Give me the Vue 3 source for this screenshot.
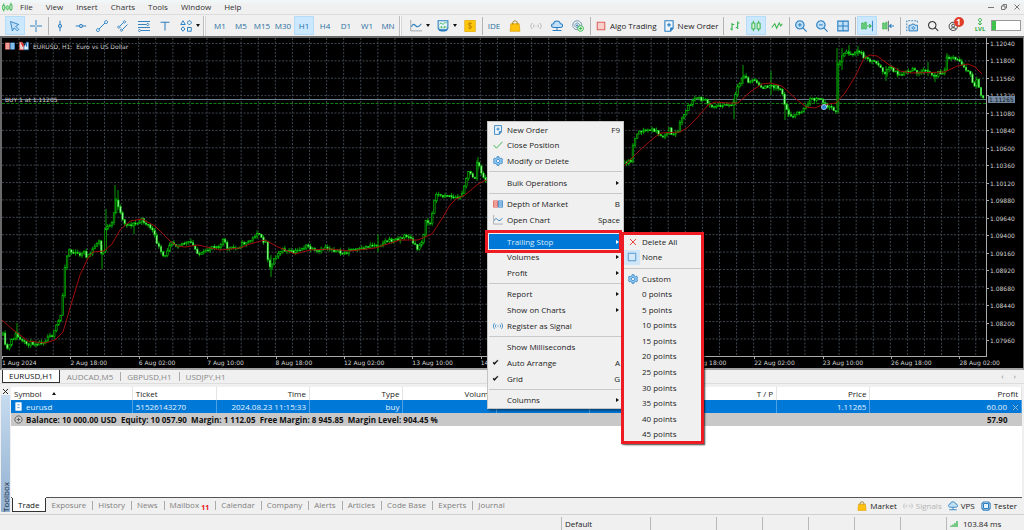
<script setup>
import { h } from 'vue'

const BLUE = '#2b7fc0'
const GREEN = '#35b44a'
const SKY = '#bfe0f8'

/* Icon shapes on a 16-unit grid: d = path, s = stroke, f = fill, w = stroke width, a = dash pattern */
const shapes = {
  logo: [{ d: 'M1 5h3v6h-3zM2.500 2v3M2.500 11v3M11.500 4h3v7h-3zM13 1v3M13 11v2', s: GREEN, w: 1.3 }, { d: 'M5 8l3-3 3 3-3 4z', s: GREEN, f: '#8fe09c' }],
  cursor: [{ d: 'M2 2l11 4-4 2.500 4 4-2 2-4-4-2.500 4z', s: BLUE, f: SKY, w: 1.2 }],
  cross: [{ d: 'M8 0v16M0 8h16', s: BLUE, w: 1.3 }, { d: 'M6.500 8h3M8 6.500v3', s: '#f0f0f0', w: 1 }],
  vline: [{ d: 'M8 1v4.500M8 10.500V15', s: BLUE, w: 1.4 }, { d: 'M8 6a2 2 0 1 0 .01 0z', s: BLUE, w: 1.4 }],
  hline: [{ d: 'M1 8h4.500M10.500 8H15', s: BLUE, w: 1.4 }, { d: 'M8 6a2 2 0 1 0 .01 0z', s: BLUE, w: 1.4 }],
  trend: [{ d: 'M3.500 12.500l9-9', s: BLUE, w: 1.3 }, { d: 'M2.500 11.500a2 2 0 1 0 .01 0zM13.500 .8a2 2 0 1 0 .01 0z', s: BLUE, f: '#e8f2fa', w: 1.3 }],
  channel: [{ d: 'M3 9l7-7M6 14l8-8', s: BLUE, w: 1.3 }, { d: 'M2.500 8a1.500 1.500 0 1 0 .01 0zM10 1a1.500 1.500 0 1 0 .01 0zM6 12a1.500 1.500 0 1 0 .01 0z', s: BLUE, f: '#f0f0f0', w: 1.2 }],
  fibo: [{ d: 'M0 2h16M0 6h11M0 10h16M4 14h12', s: BLUE, w: 1.3 }, { d: 'M13 4.500a1.500 1.500 0 1 0 .01 0zM2 12.500a1.500 1.500 0 1 0 .01 0z', s: BLUE, f: '#f0f0f0', w: 1.2 }],
  tee: [{ d: 'M2 3h12M8 3v11', s: BLUE, w: 1.4 }],
  figures: [{ d: 'M4 1l3 5H1zM12.500 1a2.500 2.500 0 1 0 .01 0zM4 9l2.500 3L4 15l-2.500-3zM10 10h5v5h-5z', s: BLUE, f: '#e8f2fa', w: 1.3 }],
  chart: [{ d: 'M1 0v14.500h15', s: '#8a8f94', w: 1 }, { d: 'M2 9c2-5 4-3 6-1s4 1 7-3', s: BLUE, w: 1.5 }],
  indicator: [{ d: 'M1.500 1h13v10c-2 5-11 5-13 0z', s: BLUE, f: '#e4f2fc', w: 1.4 }, { d: 'M3 6c3-4 4 1 6-1s2-2 4-1', s: GREEN, w: 1.2 }, { d: 'M4 9v2M6 8v3M8 9v2M10 8v3M12 8v3', s: GREEN, w: 1 }, { d: 'M3 13.500h10', s: BLUE, w: 2.5 }],
  dollar: [{ d: 'M1 0.500h14v15H1z', s: '#e0a800', f: '#ffc80a' }, { d: 'M10.500 5c-1-1.500-5-1.500-5 .7s5 1.300 5 3.400-4 2.400-5.200.6M8 3v9.500', s: '#b57c00', w: 1.1 }],
  bag: [{ d: 'M2.500 5h11l1 10h-13z', s: '#e0a100', f: '#ffc20e' }, { d: 'M5 6V3.500c0-3 6-3 6 0V6', s: '#9c7a1c', w: 1.3 }],
  signalOff: [{ d: 'M3 4c-2.500 2-2.500 6 0 8M5.500 6c-1 1-1 3 0 4M13 4c2.500 2 2.500 6 0 8M10.500 6c1 1 1 3 0 4M7.500 8h1', s: '#b4b8bb', w: 1.3 }],
  signal: [{ d: 'M2.500 3.500c-2.500 2-2.500 7 0 9M4.800 5.500c-1.300 1.500-1.300 3.500 0 5M13.500 3.500c2.500 2 2.500 7 0 9M11.200 5.500c1.300 1.500 1.300 3.500 0 5M7 8h2', s: BLUE, w: 1.3 }],
  cloud: [{ d: 'M4 10C-.5 10 0 5 3.500 5c.5-5 8-5 9 0 4 0 4 5 0 5z', s: BLUE, f: SKY, w: 1.4 }, { d: 'M8 10v4M2 14h12', s: BLUE, w: 1.4 }],
  radar: [{ d: 'M7 1a6 6 0 1 0 .01 0zM7 4a3.200 3.200 0 1 0 .01 0z', s: '#6e97b5', w: 1.3 }, { d: 'M7 6.500a1 1 0 1 0 .01 0z', s: BLUE, w: 1.3 }, { d: 'M11.500 7.500a3.800 3.800 0 1 0 .01 0z', s: GREEN, f: '#d8f5dc', w: 1.2 }, { d: 'M9.500 11.300h4M11.500 9.300v4', s: GREEN, w: 1.2 }],
  algo: [{ d: 'M3 3h10v10H3z', s: '#e0605a', f: '#f9d0cc', w: 1.4 }],
  order: [{ d: 'M2.500 1h11v10l-3.500 4H2.500z', s: BLUE, f: '#eef6fd', w: 1.4 }, { d: 'M13.500 10.500H10V15', s: BLUE, f: BLUE }, { d: 'M5.500 6.500h5M8 4v5', s: BLUE, w: 1.5 }],
  bars: [{ d: 'M4 4v10M1.500 12H4M4 6h3M11.500 2v10M9 10h2.500M11.500 4H14', s: GREEN, w: 1.5 }],
  candles: [{ d: 'M2.500 4h4v8h-4zM4.500 1v3M4.500 12v3M9.500 4h4v8h-4zM11.500 1v3M11.500 12v3', s: GREEN, f: '#d3f3d8', w: 1.3 }],
  zigzag: [{ d: 'M1 10l4-5 2.500 6L11 4l2 4 2-3', s: GREEN, w: 1.4 }],
  zoomIn: [{ d: 'M6.500 1a5.500 5.500 0 1 0 .01 0zM10.500 10.500l5 5', s: BLUE, f: SKY, w: 1.5 }, { d: 'M4 6.500h5M6.500 4v5', s: BLUE, w: 1.3 }],
  zoomOut: [{ d: 'M6.500 1a5.500 5.500 0 1 0 .01 0zM10.500 10.500l5 5', s: BLUE, f: SKY, w: 1.5 }, { d: 'M4 6.500h5', s: BLUE, w: 1.3 }],
  tiles: [{ d: 'M1 1.500h14v13H1zM8 1.500v13M1 8h14', s: BLUE, f: SKY, w: 1.4 }],
  scroll: [{ d: 'M1 4h2v8H1zM5 3h2v9H5z', s: GREEN, f: '#8fdc9b', w: 1.2 }, { d: 'M8 8h5M11 5.500L13.500 8 11 10.500', s: GREEN, w: 1.4 }, { d: 'M15.300 1v14', s: BLUE, w: 1.2 }],
  shift: [{ d: 'M1 4h2v8H1zM5 3h1.500v9H5z', s: GREEN, f: '#8fdc9b', w: 1.2 }, { d: 'M8.500 1v14', s: '#51606b', w: 1.2 }, { d: 'M10 8h6M12.500 5.500L10 8l2.500 2.500', s: BLUE, w: 1.4 }],
  camera: [{ d: 'M1 15V1h14v4', s: BLUE, w: 1.2, a: '2.5 1.5' }, { d: 'M4 7h3l1-1.500h3L12 7h3.500v7.500H4z', s: BLUE, f: SKY, w: 1.3 }, { d: 'M9.800 9a1.600 1.600 0 1 0 .01 0z', s: BLUE, w: 1.3 }],
  search: [{ d: 'M7 2a5 5 0 1 0 .01 0zM11 10.500l4 4', s: '#333', w: 1.4 }],
  user: [{ d: 'M7 3a5.500 5.500 0 1 0 .01 0zM7 5.500a2 2 0 1 0 .01 0zM3 12.500c2-3 6-3 8 0', s: '#333', w: 1.3 }],
  level: [{ d: 'M8 1a3 3 0 1 0 .01 0zM8 7v7M4.500 10.500L8 14l3.500-3.500', s: GREEN, w: 2 }],
  check: [{ d: 'M1 8l4.500 5L15 3', s: GREEN, w: 1.5 }],
  gear: [{ d: 'M6.500 1h3l.5 2 2 1 2-.5L15.500 6 14 8l1.500 2-1.500 2.500-2-.5-2 1-.5 2h-3L6 13l-2-1-2 .5L.5 10 2 8 .5 6 2 3.500l2 .5 2-1z', s: BLUE, f: '#8cc4ee', w: 1.2 }, { d: 'M8 5.500a2.500 2.500 0 1 0 .01 0z', s: BLUE, f: '#f4faff', w: 1.3 }],
  depth: [{ d: 'M.5 3h7v10h-7zM.5 6.300h7M.5 9.600h7', s: '#e0524a', f: '#f8cfcb', w: 1.3 }, { d: 'M8.500 3h7v10h-7zM8.500 6.300h7M8.500 9.600h7', s: BLUE, f: SKY, w: 1.3 }],
  remove: [{ d: 'M2 2l12 12M14 2L2 14', s: '#e53a32', w: 1.9 }],
  box: [{ d: 'M2 2h12v12H2z', s: BLUE, f: '#d3e8f9', w: 1.2 }],
  tick: [{ d: 'M2 8.500L5.500 13 14 3.500 12 3 5.500 9 4 7z', s: '#111', f: '#111', w: 1 }],
  chip: [{ d: 'M4 4h8v8H4z', s: BLUE, f: '#e4f3fd', w: 1.6 }, { d: 'M4 1.500h8l2.500 2.500v8L12 14.500H4L1.500 12V4z', s: BLUE, w: 1.8 }],
  strength: [{ d: 'M2 11v3M6 9v5M10 6v8M14 2v12', s: GREEN, w: 2.6 }],
  doc: [{ d: 'M3 1h10v14H3z', s: '#fff', f: '#fff' }, { d: 'M6 5h4M6 10h4', s: '#2b7fc0', w: 1.4 }],
  plus: [{ d: 'M8 1.500a6.500 6.500 0 1 0 .01 0zM5 8h6M8 5v6', s: '#444', w: 1.3 }],
  oneClick: [{ d: 'M1 2h4l3 6v6H1z', s: '#e0524a', f: '#f4d4d1', w: 1.2 }, { d: 'M15 2h-3L8 9v5h7z', s: BLUE, f: '#e6f3fd', w: 1.2 }, { d: 'M4 3l3 6', s: '#d22', w: 2 }, { d: 'M12 3v6', s: '#1a6fc0', w: 2 }]
}

const Icon = (props) =>
  h('svg', { viewBox: '0 0 16 16', width: props.size || 12, height: props.size || 12, 'aria-hidden': 'true' },
    shapes[props.name].map((p) =>
      h('path', { d: p.d, stroke: p.s, fill: p.f || 'none', 'stroke-width': p.w || 1, 'stroke-dasharray': p.a })))
Icon.props = ['name', 'size']

const menus = ['File', 'View', 'Insert', 'Charts', 'Tools', 'Window', 'Help']

const toolbar = [
  { icon: 'cursor', label: 'Cursor', on: true }, { icon: 'cross', label: 'Crosshair' }, { sep: true },
  { icon: 'vline', label: 'Vertical line' }, { icon: 'hline', label: 'Horizontal line' }, { icon: 'trend', label: 'Trendline' },
  { icon: 'channel', label: 'Channel' }, { icon: 'fibo', label: 'Fibonacci' }, { icon: 'tee', label: 'Text' },
  { icon: 'figures', label: 'Shapes', drop: true }, { grip: true },
  ...['M1', 'M5', 'M15', 'M30', 'H1', 'H4', 'D1', 'W1', 'MN'].map((t) => ({ text: t, on: t === 'H1' })), { grip: true },
  { icon: 'chart', label: 'Chart type', drop: true }, { icon: 'indicator', label: 'Indicators', drop: true },
  { icon: 'dollar', label: 'Symbols' }, { sep: true },
  { text: 'IDE' }, { icon: 'bag', label: 'Market' }, { icon: 'signalOff', label: 'Signals' },
  { icon: 'cloud', label: 'Hosting' }, { icon: 'radar', label: 'Network' }, { sep: true },
  { icon: 'algo', wide: 'Algo Trading' }, { icon: 'order', wide: 'New Order' }, { sep: true },
  { icon: 'bars', label: 'Bars' }, { icon: 'candles', label: 'Candles', on: true }, { icon: 'zigzag', label: 'Line' }, { sep: true },
  { icon: 'zoomIn', label: 'Zoom in' }, { icon: 'zoomOut', label: 'Zoom out' }, { icon: 'tiles', label: 'Tile windows' }, { sep: true },
  { icon: 'scroll', label: 'Auto scroll', on: true }, { icon: 'shift', label: 'Chart shift' }, { sep: true },
  { icon: 'camera', label: 'Screenshot' }, { icon: 'search', label: 'Search' }, { icon: 'user', label: 'Account', badge: '1' }
]

const prices = Array.from({ length: 18 }, (_, i) => (1.1204 - i * 0.0024).toFixed(5))
const times = ['1 Aug 2024', '2 Aug 18:00', '6 Aug 02:00', '7 Aug 10:00', '8 Aug 18:00', '12 Aug 02:00', '13 Aug 10:00',
  '14 Aug 18:00', '16 Aug 02:00', '19 Aug 10:00', '20 Aug 18:00', '22 Aug 02:00', '23 Aug 10:00', '26 Aug 18:00', '28 Aug 02:00']

/* Price path in plot units; candles are interpolated along it */
const track = [[2, 325], [3, 335], [5, 346], [8, 349], [12, 340], [16, 334], [20, 340], [25, 344], [33, 343], [40, 343], [46, 339], [50, 334],
  [53, 336], [57, 325], [61, 315], [62, 312], [64, 270], [67, 256], [69, 249], [72, 253], [78, 254], [82, 254], [84, 249], [86, 258], [88, 257],
  [93, 249], [97, 243], [99, 241], [100, 250], [103, 258], [104, 240], [105, 228], [110, 227], [113, 222], [115, 205], [116, 198], [118, 207],
  [121, 212], [123, 222], [128, 225], [134, 224], [138, 223], [142, 220], [148, 225], [152, 229], [155, 238], [159, 248], [162, 256], [166, 257],
  [168, 247], [171, 240], [175, 245], [183, 243], [191, 243], [195, 249], [200, 255], [206, 252], [212, 246], [220, 246], [223, 240], [228, 249],
  [236, 248], [244, 243], [252, 240], [257, 232], [262, 240], [267, 243], [268, 262], [271, 268], [274, 258], [278, 252], [284, 250], [293, 253],
  [300, 249], [307, 246], [315, 252], [320, 252], [325, 247], [332, 249], [343, 254], [350, 250], [360, 250], [370, 245], [378, 245], [386, 241],
  [395, 240], [403, 237], [408, 235], [413, 243], [417, 249], [421, 243], [424, 232], [426, 221], [430, 224], [433, 210], [436, 192], [441, 197],
  [446, 194], [452, 197], [460, 198], [464, 186], [468, 172], [472, 176], [475, 178], [477, 163], [479, 165], [482, 177], [486, 180], [540, 190],
  [600, 175], [625, 163], [631, 161], [633, 143], [636, 137], [641, 131], [650, 130], [656, 130], [659, 137], [664, 136], [669, 129], [673, 136],
  [678, 132], [681, 120], [685, 113], [690, 104], [696, 99], [703, 99], [709, 104], [717, 107], [726, 105], [731, 106], [734, 102], [737, 90],
  [741, 80], [744, 75], [749, 83], [754, 79], [759, 87], [768, 87], [776, 86], [782, 91], [785, 105], [788, 112], [793, 117], [798, 112],
  [805, 109], [809, 100], [815, 99], [821, 100], [825, 104], [832, 109], [836, 110], [837, 65], [840, 62], [844, 52], [850, 54], [860, 52],
  [866, 59], [874, 61], [880, 65], [885, 75], [889, 67], [894, 70], [899, 76], [905, 73], [913, 70], [920, 73], [927, 71], [935, 77], [938, 70],
  [944, 75], [946, 59], [951, 57], [958, 60], [965, 67], [970, 75], [974, 88], [977, 78], [980, 92], [984, 100]]
const spikes = [[17, 323, 340], [102, 245, 269], [106, 209, 235], [115, 185, 215], [118, 190, 210], [134, 222, 234], [271, 255, 277], [378, 234, 252],
  [478, 157, 170], [734, 98, 119], [743, 65, 84], [771, 71, 95], [785, 95, 120], [788, 104, 117], [837, 48, 108], [842, 48, 70], [849, 45, 56],
  [858, 46, 56], [886, 66, 81], [928, 62, 76], [935, 72, 82], [947, 53, 70]]

let seed = 11
const rnd = () => {
  seed = (seed * 16807) % 2147483647
  return seed / 2147483647
}
const at = (x) => {
  const i = track.findIndex((p) => p[0] >= x)
  if (i <= 0) return track[0][1]
  const [a, b] = [track[i - 1], track[i]]
  return a[1] + ((b[1] - a[1]) * (x - a[0])) / (b[0] - a[0])
}
const step = 984 / 14.4 / 32
const candles = []
let last = at(3)
for (let x = 3; x < 984; x += step) {
  const close = at(x) + (rnd() - 0.5) * 4
  const top = Math.min(last, close)
  const bottom = Math.max(last, close)
  candles.push({ x, top, h: Math.max(1, bottom - top), hi: top - rnd() * 3, lo: bottom + rnd() * 3, down: close > last })
  last = close
}

const average = 'M' + [[2, 320], [12, 329], [28, 341], [45, 343], [55, 340], [63, 332], [70, 308], [80, 275], [88, 258], [93, 252], [104, 251],
  [112, 244], [120, 230], [130, 221], [142, 219], [155, 226], [170, 241], [177, 246], [185, 247], [198, 245], [220, 250], [240, 248], [250, 244],
  [257, 242], [265, 240], [278, 247], [295, 254], [310, 250], [330, 249], [350, 251], [375, 248], [400, 240], [418, 240], [432, 234], [443, 217],
  [450, 205], [456, 199], [465, 195], [478, 184], [486, 180], [600, 180], [625, 165], [640, 150], [655, 137], [661, 133], [680, 132], [687, 128],
  [697, 118], [708, 105], [715, 102], [728, 103], [738, 103], [750, 92], [762, 84], [770, 83], [782, 86], [796, 99], [806, 107], [815, 108],
  [822, 105], [836, 103], [845, 93], [856, 75], [864, 58], [870, 55], [877, 56], [888, 64], [900, 71], [912, 73], [945, 72], [957, 66], [968, 64],
  [975, 67], [982, 74]].map((p) => p.join(' ')).join('L')

const gridX = Array.from({ length: 57 }, (_, i) => 2 + (i + 1) * (984 / 57.6))
const gridY = Array.from({ length: 18 }, (_, i) => 43.5 + i * 17.38)

const chartTabs = ['EURUSD,H1', 'AUDCAD,M5', 'GBPUSD,H1', 'USDJPY,H1']
const columns = ['Symbol', 'Ticket', 'Time', 'Type', 'Volume', 'Price', 'S / L', 'T / P', 'Price', 'Profit']
const toolTabs = ['Trade', 'Exposure', 'History', 'News', 'Mailbox', 'Calendar', 'Company', 'Alerts', 'Articles', 'Code Base', 'Experts', 'Journal']
const services = [{ t: 'Market', i: 'bag' }, { t: 'Signals', i: 'signalOff', off: true }, { t: 'VPS', i: 'cloud' }, { t: 'Tester', i: 'chip' }]

const context = [
  { t: 'New Order', i: 'order', k: 'F9' }, { t: 'Close Position', i: 'check' }, { t: 'Modify or Delete', i: 'gear' }, {},
  { t: 'Bulk Operations', sub: true }, {},
  { t: 'Depth of Market', i: 'depth', k: 'B' }, { t: 'Open Chart', i: 'chart', k: 'Space' }, {},
  { t: 'Trailing Stop', sub: true, on: true }, { t: 'Volumes', sub: true }, { t: 'Profit', sub: true }, {},
  { t: 'Report', sub: true }, { t: 'Show on Charts', sub: true }, { t: 'Register as Signal', i: 'signal' }, {},
  { t: 'Show Milliseconds' }, { t: 'Auto Arrange', i: 'tick', k: 'A' }, { t: 'Grid', i: 'tick', k: 'G' }, {},
  { t: 'Columns', sub: true }
]
const trailing = [
  { t: 'Delete All', i: 'remove' }, { t: 'None', i: 'box', picked: true }, {}, { t: 'Custom', i: 'gear' },
  ...Array.from({ length: 10 }, (_, i) => ({ t: `${i * 5} points` }))
]
</script>

<template>
  <div class="app">
    <header class="menubar">
      <Icon name="logo" :size="11" />
      <nav>
        <button v-for="m in menus" :key="m">{{ m }}</button>
      </nav>
      <div class="window-buttons">
        <button aria-label="Minimize"><svg width="6" height="6"><path d="M0 3.500h6" /></svg></button>
        <button aria-label="Restore"><svg width="6" height="6"><path d="M.5 2h3.500v3.500H.5zM2 2V.5h3.500V4H4" /></svg></button>
        <button aria-label="Close"><svg width="6" height="6"><path d="M.5 .5l5 5M5.500 .5l-5 5" /></svg></button>
      </div>
    </header>

    <div class="toolbar">
      <template v-for="(b, i) in toolbar" :key="i">
        <span v-if="b.sep" class="sep"></span>
        <span v-else-if="b.grip" class="grip"></span>
        <button v-else :class="{ on: b.on, drop: b.drop, wide: b.wide }" :aria-label="b.label">
          <Icon v-if="b.icon" :name="b.icon" :size="12" />
          <span v-if="b.wide">{{ b.wide }}</span>
          <template v-if="b.text">{{ b.text }}</template>
          <i v-if="b.drop" class="caret"></i>
          <b v-if="b.badge" class="badge">{{ b.badge }}</b>
        </button>
      </template>
      <button class="level" aria-label="Level"><Icon name="level" :size="8" /><small>LVL</small></button>
      <span class="battery"></span>
    </div>

    <main class="chart">
      <div class="plot">
        <svg viewBox="2 38 984 318" preserveAspectRatio="none">
          <path v-for="x in gridX" :key="'x' + x" class="grid" :d="`M${x} 38V356`" />
          <path v-for="y in gridY" :key="'y' + y" class="grid" :d="`M2 ${y}H986`" />
          <path class="bid" d="M2 99.500H986" />
          <path class="entry" d="M2 103.500H986" />
          <path v-for="s in spikes" :key="'s' + s[0]" class="wick" :d="`M${s[0]} ${s[1]}V${s[2]}`" />
          <g v-for="c in candles" :key="c.x">
            <path class="wick" :d="`M${c.x} ${c.hi}V${c.lo}`" />
            <rect :class="c.down ? 'down' : 'up'" :x="c.x - 0.8" :y="c.top" width="1.600" :height="c.h" />
          </g>
          <path class="average" :d="average" />
          <circle cx="824" cy="107" r="2.500" fill="#2f7fd0" stroke="#9cc8f0" />
        </svg>
        <div class="caption">
          <Icon name="depth" :size="10" /><Icon name="oneClick" :size="10" />
          <span>EURUSD, H1:&nbsp; Euro vs US Dollar</span>
        </div>
        <span class="position">BUY 1 at 1.11205</span>
      </div>
      <div class="prices">
        <span v-for="p in prices" :key="p">{{ p }}</span>
        <b class="current">1.11265</b>
      </div>
      <div class="times">
        <span v-for="t in times" :key="t">{{ t }}</span>
      </div>
    </main>

    <div class="chart-tabs">
      <button v-for="(t, i) in chartTabs" :key="t" :class="{ active: i === 0 }">{{ t }}</button>
      <span class="arrows"><i>‹</i><i>›</i></span>
    </div>

    <section class="toolbox">
      <aside>
        <button aria-label="Close toolbox"><svg width="5" height="5"><path d="M0 0l5 5M5 0L0 5" /></svg></button>
        <div class="strip"><span>Toolbox</span></div>
      </aside>
      <div class="panel">
        <div class="sheet">
          <table>
            <colgroup><col v-for="(c, i) in columns" :key="i" :class="'c' + i" /></colgroup>
            <thead>
              <tr><th v-for="(c, i) in columns" :key="i">{{ c }}<i v-if="i === 0" class="sort"></i></th></tr>
            </thead>
            <tbody>
              <tr class="deal">
                <td><span class="symbol"><Icon name="doc" :size="9" />eurusd</span></td>
                <td>51526143270</td><td>2024.08.23 11:15:33</td><td>buy</td><td></td><td></td><td></td><td></td><td>1.11265</td>
                <td>60.00<button aria-label="Close deal"><svg width="5" height="5"><path d="M0 0l5 5M5 0L0 5" /></svg></button></td>
              </tr>
              <tr class="balance">
                <td colspan="9"><span class="symbol"><Icon name="plus" :size="9" />Balance: 10 000.00 USD&nbsp; Equity: 10 057.90&nbsp; Margin: 1 112.05&nbsp; Free Margin: 8 945.85&nbsp; Margin Level: 904.45 %</span></td>
                <td>57.90</td>
              </tr>
            </tbody>
          </table>
        </div>
        <div class="tool-tabs">
          <button v-for="(t, i) in toolTabs" :key="t" :class="{ active: i === 0 }">{{ t }}<sub v-if="t === 'Mailbox'">11</sub></button>
          <div class="services">
            <button v-for="s in services" :key="s.t" :disabled="s.off"><Icon :name="s.i" :size="10" />{{ s.t }}</button>
          </div>
        </div>
      </div>
    </section>

    <footer>
      <span class="blank"></span><span class="profile">Default</span><span class="w66"></span><span></span><span></span><span></span><span></span><span></span>
      <span class="ping"><Icon name="strength" :size="8" />103.84 ms</span>
    </footer>

    <ul class="popup context" role="menu">
      <li v-for="(m, i) in context" :key="i" :class="{ line: !m.t, on: m.on }">
        <button v-if="m.t" role="menuitem">
          <span class="slot" :class="{ mark: m.i === 'tick' }"><Icon v-if="m.i" :name="m.i" :size="m.i === 'tick' ? 7 : 10" /></span>
          <span class="name">{{ m.t }}</span>
          <kbd v-if="m.k">{{ m.k }}</kbd>
          <i v-if="m.sub" class="more"></i>
        </button>
      </li>
    </ul>
    <ul class="popup submenu" role="menu">
      <li v-for="(m, i) in trailing" :key="i" :class="{ line: !m.t }">
        <button v-if="m.t" role="menuitem">
          <span class="slot" :class="{ picked: m.picked }"><Icon v-if="m.i" :name="m.i" :size="m.i === 'remove' ? 8 : 10" /></span>
          <span class="name">{{ m.t }}</span>
        </button>
      </li>
    </ul>
    <div class="frame frame-item"></div>
    <div class="frame frame-sub"></div>
  </div>
</template>

<style>
body { background: #f0f0f0; }
</style>

<style scoped>
.app { position: relative; display: flex; flex-direction: column; min-height: 100vh; overflow: hidden; background: #f0f0f0; color: #222; font: 8px/12px "Open Sans", "Noto Sans", sans-serif; }
button { display: inline-flex; align-items: center; margin: 0; padding: 0; border: 0; background: none; color: inherit; font: inherit; white-space: nowrap; }
svg { display: block; flex: none; }
i, kbd { font: inherit; }

.menubar { display: flex; align-items: center; height: 14px; padding: 0 4px 0 2px; border-bottom: 1px solid #dcdcdc; background: linear-gradient(#f1f8fa, #f0f0f0 5px); color: #333; }
.menubar nav { display: flex; gap: 13px; margin-left: 7px; }
.window-buttons { display: flex; gap: 7px; margin-left: auto; }
.window-buttons path { fill: none; stroke: #777; }

.toolbar { display: flex; align-items: center; gap: 1px; height: 21px; padding: 0 3px 0 5px; }
.toolbar button { position: relative; flex: none; justify-content: center; width: 20px; height: 19px; box-sizing: border-box; color: #2a6f9f; }
.toolbar button.on { border: 1px solid #b5dcf8; background: #cce8ff; }
.toolbar button.drop { justify-content: space-between; width: 26px; padding: 0 2px 0 4px; }
.toolbar button.wide { gap: 3px; width: auto; padding: 0 2px 0 3px; color: #222; }
.toolbar .sep { flex: none; width: 1px; height: 18px; margin-left: 1px; background: #b4b4b4; }
.toolbar .grip { flex: none; box-sizing: border-box; width: 6px; height: 20px; border-left: 1px solid #bdbdbd; background: linear-gradient(90deg, #fafafa 1px, #d6d6d6 1px, #d6d6d6 2px, transparent 2px); }
.caret { width: 0; height: 0; border: 2px solid transparent; border-top: 3px solid #111; border-bottom: 0; }
.badge { position: absolute; top: 1px; right: 0; width: 10px; height: 10px; border-radius: 5px; background: #e03c28; color: #fff; font-size: 8px; line-height: 10px; text-align: center; }
.toolbar .level { flex-direction: column; margin-left: auto; color: #2fae45; }
.level small { font-size: 6px; font-weight: 700; line-height: 7px; }
.battery { flex: none; width: 28px; height: 9px; border: 1px solid #999; background: linear-gradient(90deg, #3fc34c 4px, #fff 4px); }

.chart { display: grid; grid-template-columns: 1fr 36px; border: 2px solid #6a6a6a; border-right: 1px solid #888; border-bottom: 2px solid #a4a4a4; background: #000; color: #d0d0d0; font: 6px/9px "DejaVu Sans", "Noto Sans", sans-serif; }
.plot { position: relative; border-right: 1px solid #aaa; border-bottom: 1px solid #aaa; }
.plot svg { width: 100%; height: 318px; overflow: hidden; }
.grid { fill: none; stroke: #3d454e; stroke-dasharray: 2 1.500; }
.bid { stroke: #6c7c8c; }
.entry { stroke: #0c800c; stroke-dasharray: 3 1.500; }
.wick { stroke: #00a000; stroke-width: 1; }
.up { fill: #001c00; stroke: #00c400; stroke-width: 0.600; }
.down { fill: #8df58d; stroke: #00d000; stroke-width: 0.400; }
.average { fill: none; stroke: #a00c0c; }
.caption { position: absolute; top: 3px; left: 3px; display: flex; align-items: center; gap: 4px; }
.caption svg { width: 10px; height: 10px; }
.position { position: absolute; top: 57px; left: 3px; }
.prices { position: relative; display: flex; flex-direction: column; justify-content: space-between; padding: 1px 0 12px; }
.prices > span { display: flex; align-items: center; gap: 1px; }
.prices > span::before { content: ""; width: 2px; height: 1px; background: #aaa; }
.current { position: absolute; top: 58px; left: 1px; padding: 0 1px; background: #7388a0; color: #10161c; line-height: 7px; font-weight: 400; }
.times { grid-column: 1; display: grid; grid-template-columns: repeat(15, calc(100% / 14.4)); height: 11px; line-height: 11px; white-space: nowrap; }
.times span { background: linear-gradient(#aaa, #aaa) 0 0 / 1px 2px no-repeat; }

.chart-tabs { display: flex; align-items: stretch; height: 13px; padding-left: 2px; color: #888; }
.chart-tabs button { padding: 0 7px; }
.chart-tabs button + button + button { background: linear-gradient(#aaa, #aaa) 0 2px / 1px 9px no-repeat; }
.chart-tabs .active { padding: 0 6px; border: 1px solid #333; border-top: 0; background: #fff; color: #111; }
.arrows { display: flex; gap: 10px; margin-left: auto; padding-right: 8px; color: #888; }

.toolbox { display: flex; flex: 1; padding: 3px 2px 0 1px; border-top: 1px solid #ddd; }
aside { display: flex; flex-direction: column; flex: none; width: 9px; margin-right: 1px; padding-bottom: 2px; }
aside button { justify-content: center; height: 8px; }
aside path { stroke: #222; }
.strip { display: flex; flex: 1; align-items: flex-end; justify-content: center; background: linear-gradient(#c6dbef, #92b0d0); }
.strip span { writing-mode: vertical-rl; transform: rotate(180deg); color: #1b2a3a; line-height: 9px; }
.panel { display: flex; flex: 1; flex-direction: column; min-width: 0; }
.sheet { flex: 1; border-bottom: 1px solid #555; background: #fff; }
table { width: 100%; border-collapse: collapse; table-layout: fixed; }
.c0 { width: 12%; } .c1 { width: 8.3%; } .c9 { width: 15%; }
th, td { height: 13px; padding: 0 3px; border-right: 1px solid #e4e4e4; font-weight: 400; line-height: 12px; text-align: right; white-space: nowrap; }
th:nth-child(-n+2), td:nth-child(-n+2) { text-align: left; }
.sort { display: inline-block; margin: 0 0 2px 10px; border: 2px solid transparent; border-top: 0; border-bottom: 3px solid #111; }
.deal td { background: #0078d7; color: #e6f3ff; border-right-color: #4da2e6; }
.deal button { margin-left: 6px; }
.deal path { stroke: #9cb4c8; }
.symbol { display: flex; align-items: center; gap: 3px; }
.balance td { border: 0; background: #c8c8c8; color: #111; font-weight: 700; }
.balance td:last-child { padding-right: 14px; text-align: right; }

.tool-tabs { display: flex; align-items: flex-start; height: 16px; padding-left: 1px; color: #808080; }
.tool-tabs > button { height: 14px; padding: 0 6px; }
.tool-tabs > button + button + button { background: linear-gradient(#aaa, #aaa) 0 3px / 1px 9px no-repeat; }
.tool-tabs > .active { padding: 0 5px; border: 1px solid #333; border-top: 0; background: #fff; box-shadow: 0 -1px #fff; color: #111; box-sizing: border-box; }
sub { align-self: flex-end; margin-left: 2px; color: #e81010; font-size: 7px; font-weight: 700; line-height: 9px; }
.services { display: flex; gap: 6px; margin-left: auto; padding: 1px 5px 0 0; color: #222; }
.services button { gap: 3px; height: 14px; }
.services button:disabled { color: #b4b4b4; }

footer { display: flex; height: 15px; border-top: 1px solid #d0d0d0; }
footer span { flex: none; box-sizing: border-box; width: 46px; height: 13px; margin-top: 2px; border-left: 1px solid #b8b8b8; line-height: 13px; }
footer .blank { flex: 1; border: 0; }
footer .profile { width: 89px; padding-left: 3px; }
footer .w66 { width: 66px; }
footer .ping { display: flex; align-items: center; gap: 5px; width: 78px; padding-left: 3px; }

.popup { position: absolute; display: flex; flex-direction: column; box-sizing: border-box; margin: 0; padding: 0; border: 1px solid #c4c4c4; background: #f0f0f0; list-style: none; box-shadow: 2px 2px 2px rgba(0, 0, 0, .4); }
.popup li { display: flex; flex: 1; padding: 0 1px; }
.popup .line { flex: none; align-items: center; height: 6px; }
.popup .line::before { content: ""; flex: 1; height: 1px; background: #c8c8c8; }
.popup button { flex: 1; }
.popup .on button { background: #0078d7; color: #d9ecfb; }
.slot { display: flex; align-items: center; justify-content: center; width: 18px; }
.slot.mark { justify-content: flex-start; padding-left: 3px; box-sizing: border-box; }
.picked { align-self: stretch; box-sizing: border-box; width: 16px; margin-right: 2px; background: #cfe6f8; }
.name { flex: 1; text-align: left; }
.more { margin-right: 3px; border: 2px solid transparent; border-left: 3px solid #111; border-right: 0; }
.on .more { border-left-color: #fff; }
kbd { margin-right: 2px; }
.context { top: 121px; left: 487px; width: 137px; height: 288px; }
.submenu { top: 233px; left: 622px; width: 81px; height: 210px; }
.frame { position: absolute; box-sizing: border-box; border: 3px solid #ed1c24; pointer-events: none; }
.frame-item { top: 230px; left: 485px; width: 137px; height: 23px; }
.frame-sub { top: 232px; left: 621px; width: 83px; height: 212px; box-shadow: 1px 1px 1px rgba(0, 0, 0, .4); }
</style>
